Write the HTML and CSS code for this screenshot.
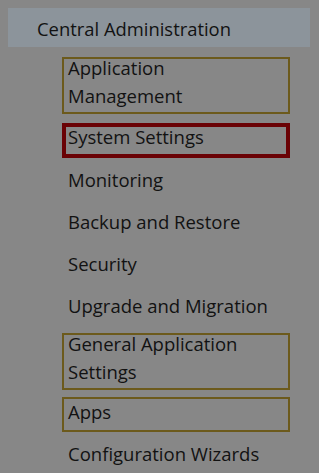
FILE: index.html
```html
<!DOCTYPE html>
<html lang="en">
<head>
<meta charset="utf-8">
<title>Central Administration</title>
<link rel="stylesheet" href="styles.css">
</head>
<body>
<div class="panel">
  <div class="header">Central Administration</div>
  <ul class="nav">
    <li class="item multi boxed"><span class="label">Application<br>Management</span></li>
    <li class="item single selected"><span class="label">System Settings</span></li>
    <li class="item single"><span class="label">Monitoring</span></li>
    <li class="item single"><span class="label">Backup and Restore</span></li>
    <li class="item single"><span class="label">Security</span></li>
    <li class="item single"><span class="label">Upgrade and Migration</span></li>
    <li class="item multi boxed"><span class="label">General Application<br>Settings</span></li>
    <li class="item single boxed"><span class="label">Apps</span></li>
    <li class="item single"><span class="label">Configuration Wizards</span></li>
  </ul>
</div>
</body>
</html>
```
FILE: styles.css
```css
html, body {
  margin: 0;
  padding: 0;
  background: #878787;
}
body {
  width: 319px;
  height: 473px;
  overflow: hidden;
  font-family: "Open Sans", "Noto Sans", sans-serif;
  color: #121212;
}
.panel {
  padding: 8px 9px 0 8px;
}
.header {
  box-sizing: border-box;
  height: 39px;
  line-height: 37px;
  padding-top: 2px;
  background: #8c949b;
  padding-left: 29px;
  font-size: 18.4px;
}
.nav {
  list-style: none;
  margin: 0;
  padding: 10px 0 0 54px;
  display: flex;
  flex-direction: column;
  gap: 7px;
  width: 228px;
}
.item {
  box-sizing: border-box;
  font-size: 18.5px;
  border: 2px solid transparent;
  padding: 0 4px;
  white-space: nowrap;
}
.label {
  display: block;
  line-height: 27.5px;
}
.item.multi {
  height: 57px;
}
.item.multi .label {
  margin-top: -4.8px;
}
.item.multi:first-child {
  margin-bottom: 2px;
}
.item.single {
  height: 35px;
}
.item.single .label {
  margin-top: -1.5px;
}
.item.boxed {
  border-color: #6c5a1c;
}
.item.selected {
  border: 4px solid #6a0205;
  padding: 0 2px;
}
.item.selected .label {
  margin-top: -4px;
}
```
